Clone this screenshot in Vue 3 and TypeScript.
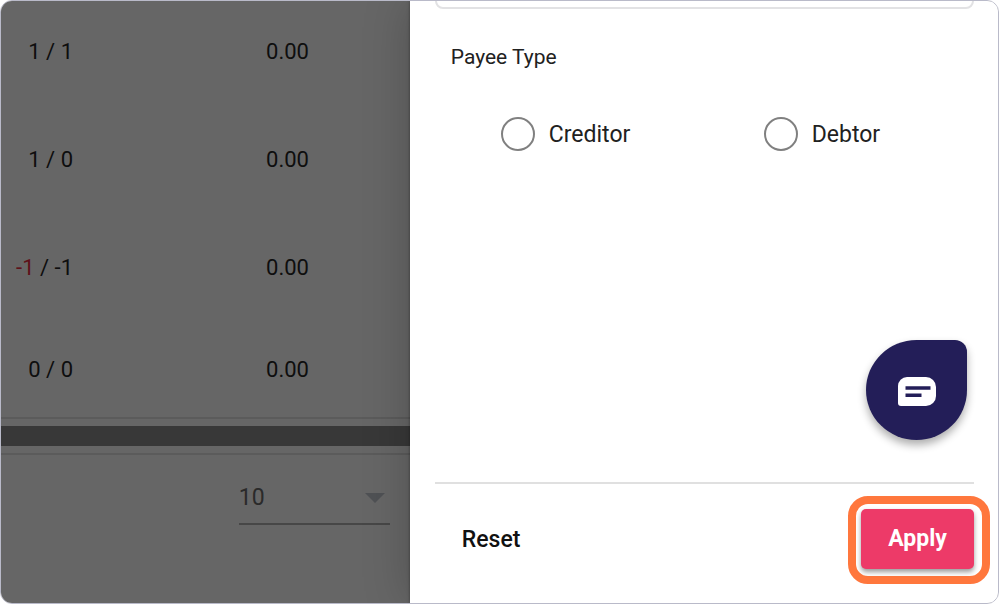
<script setup lang="ts">
import { ref } from 'vue'

interface Row {
  actual: number
  planned: number
  amount: string
}

const rows: Row[] = [
  { actual: 1, planned: 1, amount: '0.00' },
  { actual: 1, planned: 0, amount: '0.00' },
  { actual: -1, planned: -1, amount: '0.00' },
  { actual: 0, planned: 0, amount: '0.00' },
]

const payeeTypes = ['Creditor', 'Debtor']
const payeeType = ref('')
const pageSize = ref(10)
const search = ref('')

function reset(): void {
  payeeType.value = ''
  search.value = ''
}
</script>

<template>
  <div class="frame">
    <main class="listing">
      <div class="table-area">
        <table>
          <tbody>
            <tr v-for="(row, i) in rows" :key="i">
              <td class="count"><span :class="{ negative: row.actual < 0 }">{{ row.actual }}</span> / {{ row.planned }}</td>
              <td class="amount">{{ row.amount }}</td>
              <td></td>
            </tr>
          </tbody>
        </table>
      </div>
      <div class="scroll-track"><div class="scroll-thumb"></div></div>
      <div class="paginator">
        <div class="page-size">
          <select v-model="pageSize" aria-label="Items per page">
            <option :value="10">10</option>
            <option :value="25">25</option>
            <option :value="50">50</option>
          </select>
          <svg class="arrow" viewBox="0 0 20 10" aria-hidden="true"><path d="M0 0h20L10 10z" /></svg>
        </div>
      </div>
    </main>

    <aside class="drawer">
      <div class="content">
        <input v-model="search" class="field" type="text" aria-label="Payee" />
        <fieldset>
          <legend>Payee Type</legend>
          <div class="options">
            <label v-for="type in payeeTypes" :key="type" class="option">
              <input v-model="payeeType" type="radio" name="payee-type" :value="type" />
              <span>{{ type }}</span>
            </label>
          </div>
        </fieldset>
      </div>
      <footer class="actions">
        <button type="button" class="reset" @click="reset">Reset</button>
        <div class="highlight">
          <button type="button" class="apply">Apply</button>
        </div>
      </footer>
      <button type="button" class="chat" aria-label="Open chat">
        <svg viewBox="0 0 40 32" aria-hidden="true">
          <path class="bubble" d="M10 1H29A10 10 0 0 1 39 11V20A10 10 0 0 1 29 30H4Q1 30 1 27V10A9 9 0 0 1 10 1Z" />
          <path class="lines" d="M8.500 12H33.500M8.500 19.300H24.500" />
        </svg>
      </button>
    </aside>
  </div>
</template>

<style>
body {
  background: #fff;
}
</style>

<style scoped>
.frame {
  box-sizing: border-box;
  display: flex;
  height: 100vh;
  border: 1px solid #b9bac9;
  border-radius: 12px;
  overflow: hidden;
  font-family: Roboto, 'Liberation Sans', sans-serif;
  font-size: 23px;
  line-height: 28px;
  color: #212121;
}

button,
input,
select {
  font: inherit;
  color: inherit;
}

.listing {
  flex: 0 0 41%;
  display: flex;
  flex-direction: column;
  min-width: 0;
  background: #666;
  color: #0e0e0e;
}

.table-area {
  flex: 1;
  display: flex;
  align-items: flex-end;
  min-height: 0;
  overflow: hidden;
}

table {
  width: 100%;
  table-layout: fixed;
  border-collapse: collapse;
  font-size: 22px;
}

tr {
  height: 108px;
}

tr:last-child {
  height: 96px;
}

td {
  padding: 2px 0 0;
  text-align: right;
  white-space: nowrap;
}

.count {
  width: 72px;
}

.amount {
  width: 236px;
}

.negative {
  color: #5e1119;
}

.scroll-track {
  padding: 7px 0;
  border-top: 2px solid #5b5b5b;
  border-bottom: 2px solid #5b5b5b;
}

.scroll-thumb {
  height: 20px;
  background: #383838;
}

.paginator {
  box-sizing: border-box;
  height: 148px;
  padding: 20px 20px 0 0;
}

.page-size {
  display: flex;
  align-items: center;
  width: 151px;
  height: 48px;
  margin-left: auto;
  border-bottom: 2px solid #474747;
}

.page-size select {
  flex: 1;
  min-width: 0;
  height: 48px;
  padding: 0 0 2px;
  border: 0;
  background: none;
  appearance: none;
  color: #2a2a2a;
}

.arrow {
  width: 20px;
  height: 10px;
  margin: 0 5px 2px 0;
  fill: #4f5154;
}

.drawer {
  position: relative;
  flex: 1;
  display: flex;
  flex-direction: column;
  min-width: 0;
  padding: 0 24px 0 25px;
  background: #fff;
  box-shadow: 0 0 3px rgba(0, 0, 0, 0.4), 0 0 44px rgba(0, 0, 0, 0.22);
}

.content {
  flex: 1;
  min-height: 0;
}

.field {
  box-sizing: border-box;
  display: block;
  width: 100%;
  height: 60px;
  margin-top: -52px;
  padding: 0 16px;
  border: 2px solid #e2e2e4;
  border-radius: 8px;
  background: #fff;
}

fieldset {
  margin: 34px 0 0;
  padding: 0 0 0 16px;
  border: 0;
}

legend {
  padding: 0;
  font-size: 21px;
}

.options {
  display: grid;
  grid-template-columns: 5fr 4fr;
  padding: 46px 0 0 50px;
}

.option {
  display: flex;
  align-items: center;
  gap: 14px;
}

.option span {
  padding-top: 1px;
}

.option input {
  appearance: none;
  width: 34px;
  height: 34px;
  margin: 0;
  border: 2px solid #808080;
  border-radius: 50%;
}

.option input:checked {
  background: radial-gradient(circle, #ed3a68 45%, transparent 50%);
}

.actions {
  box-sizing: border-box;
  display: flex;
  align-items: center;
  justify-content: space-between;
  height: 121px;
  padding: 0 0 8px 10px;
  border-top: 2px solid #e0e0e0;
}

.reset {
  padding: 16px 17px;
  border: 0;
  background: none;
  font-weight: 500;
  color: #111;
}

.highlight {
  margin-right: -16px;
  padding: 5px 8px 7px 5px;
  border: 8px solid #ff773d;
  border-radius: 20px;
}

.apply {
  display: block;
  width: 113px;
  height: 60px;
  padding: 0;
  border: 0;
  border-radius: 5px;
  background: #ed3a68;
  box-shadow: 0 3px 5px rgba(0, 0, 0, 0.4);
  color: #fff;
  font-weight: 700;
}

.chat {
  position: absolute;
  right: 31px;
  bottom: 163px;
  display: flex;
  align-items: center;
  justify-content: center;
  width: 101px;
  height: 100px;
  padding: 4px 0 0;
  border: 0;
  border-radius: 50% 12px 50% 50%;
  background: #231e58;
  box-shadow: 0 5px 8px rgba(0, 0, 0, 0.32);
}

.chat svg {
  width: 40px;
  height: 32px;
}

.bubble {
  fill: #fff;
}

.lines {
  fill: none;
  stroke: #231e58;
  stroke-width: 3.600;
}
</style>
